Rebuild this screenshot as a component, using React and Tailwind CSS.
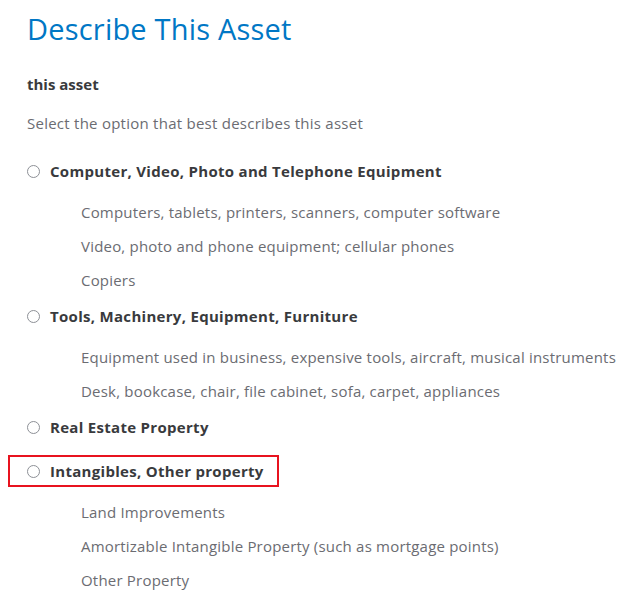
import React from "react";

const groups = [
  { label: "Computer, Video, Photo and Telephone Equipment", items: ["Computers, tablets, printers, scanners, computer software", "Video, photo and phone equipment; cellular phones", "Copiers"] },
  { label: "Tools, Machinery, Equipment, Furniture", items: ["Equipment used in business, expensive tools, aircraft, musical instruments", "Desk, bookcase, chair, file cabinet, sofa, carpet, appliances"] },
  { label: "Real Estate Property", items: [] },
  { label: "Intangibles, Other property", items: ["Land Improvements", "Amortizable Intangible Property (such as mortgage points)", "Other Property"], boxed: true },
];

function Radio() {
  return <span className="inline-block w-[13px] h-[13px] rounded-full border border-[#8d9096] bg-white shrink-0" />;
}

export default function App() {
  return (
    <div className="w-[628px] h-[603px] bg-white overflow-hidden pl-[27px] pt-[9px] text-[#393a3d]" style={{ fontFamily: "'Open Sans', sans-serif" }}>
      <h1 className="text-[29px] leading-[40px] tracking-[0.2px] text-[#0077c5] font-normal">Describe This Asset</h1>
      <div className="mt-[25px] text-[15px] leading-[20px] font-bold text-[#393a3d]">this asset</div>
      <div className="mt-[19px] text-[15px] leading-[20px] tracking-[0.25px] text-[#6b6c72]">Select the option that best describes this asset</div>
      <div className="mt-[22px] flex flex-col">
        {groups.map((g, i) => (
          <div key={i} className={"flex flex-col " + (g.items.length ? "mb-[3px]" : "mb-[12px]")}>
            <div className={"flex items-center gap-[10px] h-[32px] " + (g.boxed ? "ml-[-19px] pl-[17px] w-[271px] border-2 border-[#e8131f]" : "")}>
              <Radio />
              <span className="text-[15px] font-bold tracking-[0.3px] text-[#393a3d]">{g.label}</span>
            </div>
            {g.items.length > 0 && (
              <div className="flex flex-col pl-[54px] mt-[8px]">
                {g.items.map((t, j) => (
                  <div key={j} className="h-[34px] flex items-center text-[15px] tracking-[0.2px] text-[#6b6c72]">{t}</div>
                ))}
              </div>
            )}
          </div>
        ))}
      </div>
    </div>
  );
}
